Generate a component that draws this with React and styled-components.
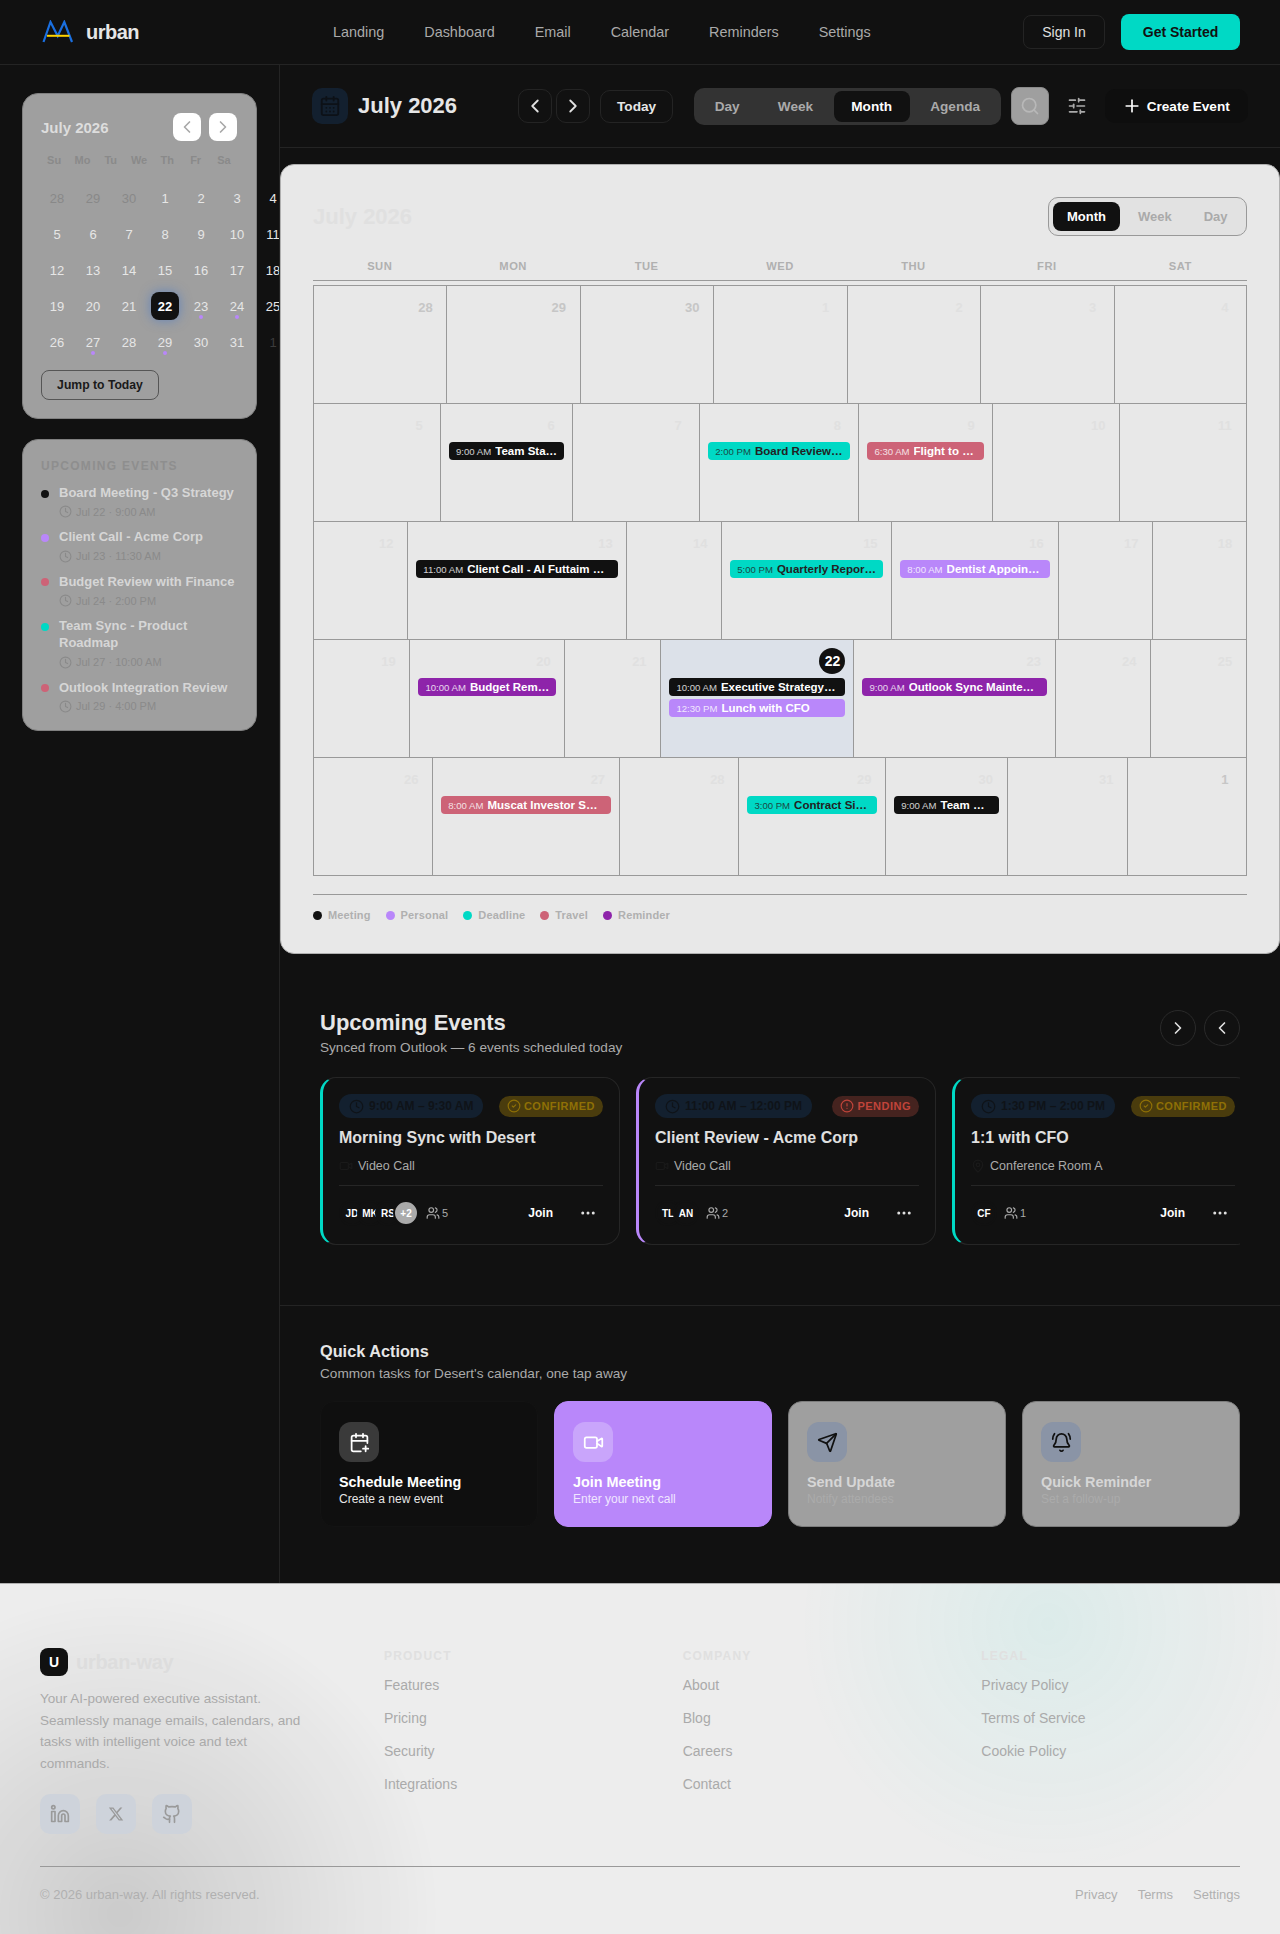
import React from "react";
import styled, { createGlobalStyle } from "styled-components";
import {
  BellRing, CalendarDays, CalendarPlus, ChevronLeft, ChevronRight, CircleAlert, CircleCheck,
  Clock, Ellipsis, Github, Linkedin, MapPin, Plus, Search, Send, SlidersHorizontal, Users, Video,
} from "lucide-react";
import { FaXTwitter } from "react-icons/fa6";

const TYPE = {
  meeting: { bg: "#111111", fg: "#ffffff" },
  personal: { bg: "#b987fa", fg: "#ffffff" },
  deadline: { bg: "#00d9c5", fg: "#222222" },
  travel: { bg: "#cd6377", fg: "#ffffff" },
  reminder: { bg: "#8e24aa", fg: "#ffffff" },
};

const Global = createGlobalStyle`
  * { box-sizing: border-box; }
  html, body { margin: 0; padding: 0; background: #111111; }
  body { font-family: "Liberation Sans", Arial, sans-serif; color: #e6e6e6; }
  button { font-family: inherit; }
`;

const Page = styled.div`
  width: 1280px;
  min-height: 1934px;
  display: flex;
  flex-direction: column;
  background: #111111;
  overflow: hidden;
`;

/* top navigation */
const Nav = styled.nav`
  height: 65px;
  flex: none;
  display: flex;
  align-items: center;
  padding: 0 40px;
  border-bottom: 1px solid #242424;
`;
const Brand = styled.div`
  display: flex;
  align-items: center;
  gap: 12px;
  svg { margin-left: 2px; display: block; }
`;
const Wordmark = styled.span`
  font-size: 20px;
  font-weight: 700;
  letter-spacing: -0.5px;
  color: #e6e6e6;
`;
const NavLinks = styled.div`
  display: flex;
  gap: 40px;
  margin-left: 194px;
`;
const NavLink = styled.a`
  font-size: 14.4px;
  color: #aaaaaa;
`;
const NavActions = styled.div`
  margin-left: auto;
  display: flex;
  align-items: center;
  gap: 16px;
`;
const SignIn = styled.button`
  width: 82px;
  height: 34px;
  border: 1px solid #242424;
  border-radius: 8px;
  background: transparent;
  color: #e0e0e0;
  font-size: 14px;
`;
const GetStarted = styled.button`
  width: 119px;
  height: 36px;
  border: 0;
  border-radius: 8px;
  background: #00d9c5;
  color: #111111;
  font-size: 14px;
  font-weight: 700;
`;

const Shell = styled.div`
  display: flex;
  flex: none;
`;

/* left rail */
const Sidebar = styled.aside`
  flex: 0 0 280px;
  width: 280px;
  padding: 28px 22px;
  border-right: 1px solid #242424;
  overflow: hidden;
  display: flex;
  flex-direction: column;
  gap: 20px;
`;
const Glass = styled.section`
  width: 235px;
  background: #9f9f9f;
  border: 1px solid #808080;
  border-radius: 16px;
  padding: ${(p) => p.$padding};
`;
const MiniHead = styled.div`
  display: flex;
  align-items: center;
  justify-content: space-between;
`;
const MiniTitle = styled.div`
  font-size: 15px;
  font-weight: 700;
  color: #dddddd;
`;
const MiniNav = styled.div`
  display: flex;
  gap: 8px;
  margin-right: 1px;
`;
const MiniBtn = styled.button`
  width: 28px;
  height: 28px;
  border: 0;
  border-radius: 8px;
  background: #ffffff;
  color: #a8a8a8;
  display: flex;
  align-items: center;
  justify-content: center;
  padding: 0;
`;
const MiniWeek = styled.div`
  display: grid;
  grid-template-columns: repeat(7, 28.3px);
  margin: 12px 0 0 -1px;
`;
const MiniWeekday = styled.div`
  text-align: center;
  font-size: 11px;
  line-height: 14px;
  font-weight: 700;
  color: #8a8a8a;
`;
const MiniDays = styled.div`
  display: grid;
  grid-template-columns: repeat(7, 28px);
  grid-auto-rows: 28px;
  gap: 8px;
  margin: 17px 0 0 2px;
  width: 280px;
`;
const MiniDay = styled.div`
  position: relative;
  display: flex;
  align-items: center;
  justify-content: center;
  font-size: 13px;
  border-radius: 8px;
  color: ${(p) => (p.$selected ? "#ffffff" : p.$muted ? "#6e6e6e" : "#e6e6e6")};
  opacity: ${(p) => (p.$muted ? 0.45 : 1)};
  font-weight: ${(p) => (p.$selected ? 700 : 400)};
  background: ${(p) => (p.$selected ? "#111111" : "transparent")};
  box-shadow: ${(p) => (p.$selected ? "0 0 12px rgba(50,110,210,.55)" : "none")};
`;
const MiniDot = styled.span`
  position: absolute;
  left: 12px;
  bottom: 1px;
  width: 4px;
  height: 4px;
  border-radius: 50%;
  background: #b987fa;
`;
const JumpBtn = styled.button`
  display: block;
  margin-top: 14px;
  height: 30px;
  width: 118px;
  border: 1px solid #555555;
  border-radius: 8px;
  background: transparent;
  color: #1a1a1a;
  font-size: 12.2px;
  font-weight: 700;
  padding: 0;
`;
const RailHeading = styled.div`
  font-size: 12px;
  line-height: 14px;
  font-weight: 700;
  letter-spacing: 1.3px;
  color: #8e8e8e;
  margin-bottom: 12px;
`;
const RailList = styled.div`
  display: flex;
  flex-direction: column;
  gap: 10.5px;
`;
const RailItem = styled.div`
  display: flex;
  gap: 10px;
`;
const RailDot = styled.span`
  flex: none;
  width: 8px;
  height: 8px;
  margin-top: 4.5px;
  border-radius: 50%;
  background: ${(p) => TYPE[p.$type].bg};
`;
const RailTitle = styled.div`
  font-size: 13px;
  line-height: 16.9px;
  font-weight: 700;
  color: #d6d6d6;
`;
const RailMeta = styled.div`
  display: flex;
  align-items: center;
  gap: 4px;
  margin-top: 3px;
  font-size: 11px;
  line-height: 14px;
  color: #8a8a8a;
`;

/* calendar */
const Main = styled.main`
  flex: 1;
  min-width: 0;
`;
const CalHeader = styled.header`
  height: 83px;
  display: flex;
  align-items: center;
  padding: 0 32px;
  border-bottom: 1px solid #242424;
`;
const HeadIcon = styled.div`
  width: 36px;
  height: 36px;
  border-radius: 10px;
  background: #13202f;
  color: #0d1117;
  display: flex;
  align-items: center;
  justify-content: center;
`;
const HeadTitle = styled.h1`
  margin: 0 61px 0 10px;
  font-size: 22px;
  font-weight: 700;
  color: #e6e6e6;
`;
const ArrowBtn = styled.button`
  width: 34px;
  height: 34px;
  margin-right: 4px;
  padding: 0;
  border: 1px solid #242424;
  border-radius: 10px;
  background: transparent;
  color: #e0e0e0;
  display: flex;
  align-items: center;
  justify-content: center;
`;
const TodayBtn = styled.button`
  margin-left: 6px;
  height: 33px;
  width: 73px;
  border: 1px solid #242424;
  border-radius: 10px;
  background: transparent;
  color: #e6e6e6;
  font-size: 13.6px;
  font-weight: 700;
  padding: 0;
`;
const Segment = styled.div`
  margin-left: 21px;
  height: 37px;
  padding: 3px;
  display: flex;
  gap: 3px;
  border-radius: 10px;
  background: #333333;
`;
const SegTab = styled.button`
  border: 0;
  padding: 0 17.6px;
  border-radius: 8px;
  font-size: 13.6px;
  font-weight: 700;
  color: ${(p) => (p.$active ? "#ffffff" : "#aaaaaa")};
  background: ${(p) => (p.$active ? "#111111" : "transparent")};
`;
const SearchBtn = styled.button`
  margin-left: 10px;
  width: 38px;
  height: 38px;
  padding: 0;
  border: 1px solid #8a8a8a;
  border-radius: 8px;
  background: #9f9f9f;
  color: #b8b8b8;
  display: flex;
  align-items: center;
  justify-content: center;
`;
const FilterIcon = styled.div`
  margin-left: 18px;
  color: #aaaaaa;
  display: flex;
`;
const CreateBtn = styled.button`
  margin-left: 18px;
  width: 143px;
  height: 34px;
  padding: 0 0 0 17px;
  border: 0;
  border-radius: 10px;
  background: #0e0e0e;
  color: #ffffff;
  font-size: 13.6px;
  font-weight: 700;
  display: flex;
  align-items: center;
  gap: 5px;
  flex: none;
`;
const CalCard = styled.section`
  margin: 16px 0 0;
  height: 790px;
  padding: 32px;
  background: #e8e8e8;
  border: 1px solid #b0b0b0;
  border-radius: 14px;
`;
const CalTop = styled.div`
  display: flex;
  align-items: center;
  justify-content: space-between;
`;
const CalTitle = styled.h2`
  margin: 0;
  font-size: 22px;
  font-weight: 700;
  color: #e0e0e0;
`;
const Toggle = styled.div`
  width: 199px;
  height: 39px;
  padding: 4px;
  display: flex;
  gap: 4px;
  border: 1px solid #999999;
  border-radius: 10px;
  background: #e2e2e2;
`;
const ToggleTab = styled.button`
  border: 0;
  padding: 0 14px;
  border-radius: 8px;
  font-size: 13px;
  font-weight: 700;
  color: ${(p) => (p.$active ? "#ffffff" : "#aaaaaa")};
  background: ${(p) => (p.$active ? "#111111" : "transparent")};
`;
const WeekHead = styled.div`
  display: grid;
  grid-template-columns: repeat(7, 1fr);
  margin-top: 24px;
  padding-bottom: 7px;
  border-bottom: 1px solid #999999;
`;
const WeekLabel = styled.div`
  text-align: center;
  font-size: 11.2px;
  line-height: 13px;
  font-weight: 700;
  letter-spacing: 0.5px;
  color: #b0b0b0;
`;
const Grid = styled.div`
  margin-top: 4px;
  border-bottom: 1px solid #999999;
`;
const Row = styled.div`
  display: grid;
  grid-template-columns: ${(p) => p.$cols};
  height: 118px;
  border-top: 1px solid #999999;
`;
const Cell = styled.div`
  min-width: 0;
  padding: 8px 8px 0;
  border-left: 1px solid #999999;
  background: ${(p) => (p.$today ? "#dce1e9" : "transparent")};
  &:last-child { border-right: 1px solid #999999; }
`;
const DateMark = styled.div`
  width: 26px;
  height: 26px;
  margin-left: auto;
  display: flex;
  align-items: center;
  justify-content: center;
  border-radius: 50%;
  font-size: ${(p) => (p.$today ? "14px" : "13px")};
  font-weight: 700;
  color: ${(p) => (p.$today ? "#ffffff" : p.$outside ? "#c6c6c6" : "#e0e0e0")};
  background: ${(p) => (p.$today ? "#111111" : "transparent")};
`;
const EventList = styled.div`
  margin-top: 4px;
  display: flex;
  flex-direction: column;
  gap: 3px;
`;
const EventChip = styled.div`
  height: 18px;
  padding: 0 7px;
  display: flex;
  align-items: center;
  gap: 4px;
  border-radius: 4px;
  background: ${(p) => TYPE[p.$type].bg};
  color: ${(p) => TYPE[p.$type].fg};
  overflow: hidden;
  white-space: nowrap;
`;
const EventTime = styled.span`
  flex: none;
  font-size: 9.6px;
  opacity: 0.8;
`;
const EventName = styled.span`
  flex: 1;
  min-width: 0;
  font-size: 11.52px;
  font-weight: 700;
  overflow: hidden;
  text-overflow: ellipsis;
`;
const Legend = styled.div`
  margin-top: 18px;
  padding-top: 13px;
  border-top: 1px solid #999999;
  display: flex;
  gap: 15px;
`;
const LegendItem = styled.div`
  display: flex;
  align-items: center;
  gap: 6px;
  font-size: 11px;
  line-height: 14px;
  font-weight: 700;
  letter-spacing: 0.15px;
  color: #b0b0b0;
`;
const LegendDot = styled.span`
  width: 9px;
  height: 9px;
  border-radius: 50%;
  background: ${(p) => TYPE[p.$type].bg};
`;

/* upcoming */
const Upcoming = styled.section`
  padding: 55px 40px 60px;
`;
const SectionHead = styled.div`
  display: flex;
  justify-content: space-between;
  align-items: flex-start;
`;
const BigHeading = styled.h2`
  margin: 0;
  font-size: 22px;
  line-height: 28px;
  font-weight: 700;
  color: #e6e6e6;
`;
const SubHeading = styled.p`
  margin: 2px 0 0;
  font-size: 13.6px;
  line-height: 17px;
  color: #aaaaaa;
`;
const RoundNav = styled.div`
  display: flex;
  gap: 8px;
  margin-top: 1px;
`;
const RoundBtn = styled.button`
  width: 36px;
  height: 36px;
  padding: 0;
  border: 1px solid #2a2a2a;
  border-radius: 50%;
  background: transparent;
  color: #e0e0e0;
  display: flex;
  align-items: center;
  justify-content: center;
`;
const Carousel = styled.div`
  margin-top: 21px;
  display: flex;
  gap: 16px;
  overflow: hidden;
`;
const EventCard = styled.article`
  flex: 0 0 300px;
  height: 168px;
  padding: 16px 16px 18px;
  border: 1px solid #262626;
  border-left: 3px solid ${(p) => TYPE[p.$type].bg};
  border-radius: 16px;
`;
const CardTop = styled.div`
  display: flex;
  align-items: center;
  justify-content: space-between;
`;
const TimePill = styled.div`
  height: 24px;
  padding: 0 10px;
  display: flex;
  align-items: center;
  gap: 5px;
  border-radius: 12px;
  background: #13202f;
  color: #0f1318;
  font-size: 12px;
  font-weight: 700;
`;
const StatusBadge = styled.div`
  height: 21px;
  padding: 0 8px;
  display: flex;
  align-items: center;
  gap: 3px;
  border-radius: 11px;
  font-size: 11px;
  font-weight: 700;
  letter-spacing: 0.5px;
  background: ${(p) => (p.$pending ? "#45231f" : "#4a3c0d")};
  color: ${(p) => (p.$pending ? "#c0443a" : "#8f7006")};
`;
const CardTitle = styled.h3`
  margin: 10px 0 0;
  font-size: 16px;
  line-height: 20px;
  font-weight: 700;
  color: #e0e0e0;
`;
const CardPlace = styled.div`
  margin-top: 11px;
  display: flex;
  align-items: center;
  gap: 5px;
  font-size: 12.5px;
  line-height: 14px;
  color: #aaaaaa;
  svg { color: #1a1a1a; }
`;
const CardFoot = styled.div`
  margin-top: 12px;
  padding-top: 14px;
  border-top: 1px solid #262626;
  display: flex;
  align-items: center;
`;
const Avatars = styled.div`
  display: flex;
`;
const Avatar = styled.div`
  flex: none;
  width: 26px;
  height: 26px;
  margin-left: ${(p) => (p.$first ? 0 : "-8px")};
  border: 2px solid #111111;
  border-radius: 50%;
  background: ${(p) => (p.$more ? "#aaaaaa" : "#111111")};
  color: #ffffff;
  font-size: 10px;
  font-weight: 700;
  display: flex;
  align-items: center;
  justify-content: center;
  position: relative;
  white-space: nowrap;
`;
const Count = styled.div`
  margin-left: 7px;
  display: flex;
  align-items: center;
  gap: 2px;
  font-size: 11px;
  color: #aaaaaa;
`;
const JoinBtn = styled.button`
  margin-left: auto;
  padding: 0 14px;
  height: 26px;
  border: 0;
  background: transparent;
  color: #ffffff;
  font-size: 12px;
  font-weight: 700;
`;
const MoreBtn = styled.button`
  margin-left: 6px;
  width: 30px;
  height: 26px;
  padding: 0;
  border: 0;
  background: transparent;
  color: #e0e0e0;
  display: flex;
  align-items: center;
  justify-content: center;
`;

/* quick actions */
const Quick = styled.section`
  border-top: 1px solid #242424;
  padding: 35px 40px 56px;
`;
const QuickHeading = styled.h2`
  margin: 0;
  font-size: 16.3px;
  line-height: 21px;
  font-weight: 700;
  color: #e6e6e6;
`;
const QuickSub = styled.p`
  margin: 3px 0 0;
  font-size: 13.6px;
  line-height: 17px;
  color: #aaaaaa;
`;
const QuickGrid = styled.div`
  margin-top: 19px;
  display: grid;
  grid-template-columns: repeat(4, 1fr);
  gap: 16px;
`;
const toneBg = { dark: "#0f0f0f", purple: "#b987fa", grey: "#9f9f9f" };
const toneBorder = { dark: "#131313", purple: "#b987fa", grey: "#7c7c7c" };
const toneTile = { dark: "#3a3a3a", purple: "#c9a5fb", grey: "#8a94a6" };
const QuickCard = styled.div`
  height: 126px;
  padding: 20px 18px;
  border: 1px solid ${(p) => toneBorder[p.$tone]};
  border-radius: 14px;
  background: ${(p) => toneBg[p.$tone]};
`;
const QuickTile = styled.div`
  width: 40px;
  height: 40px;
  border-radius: 12px;
  display: flex;
  align-items: center;
  justify-content: center;
  background: ${(p) => toneTile[p.$tone]};
  color: ${(p) => (p.$tone === "grey" ? "#111111" : "#ffffff")};
`;
const QuickLabel = styled.div`
  margin-top: 12px;
  font-size: 14.4px;
  line-height: 17px;
  font-weight: 700;
  color: ${(p) => (p.$tone === "grey" ? "#d6d6d6" : "#ffffff")};
`;
const QuickNote = styled.div`
  margin-top: 1px;
  font-size: 12px;
  line-height: 14px;
  color: ${(p) => (p.$tone === "grey" ? "#ababab" : p.$tone === "purple" ? "#f0e6ff" : "#e6e6e6")};
`;

/* footer */
const Footer = styled.footer`
  flex: 1;
  padding: 64px 40px 32px;
  border-top: 1px solid #b0b0b0;
  background:
    radial-gradient(circle 250px at 1048px 40px, rgba(0, 217, 197, 0.07), rgba(0, 217, 197, 0)),
    radial-gradient(circle 320px at 120px 330px, rgba(0, 0, 0, 0.14), rgba(0, 0, 0, 0)),
    #ededed;
`;
const FootGrid = styled.div`
  display: grid;
  grid-template-columns: 304px repeat(3, 1fr);
  gap: 40px;
`;
const FootBrand = styled.div`
  display: flex;
  align-items: center;
  gap: 8px;
`;
const FootMark = styled.div`
  width: 28px;
  height: 28px;
  border-radius: 8px;
  background: #111111;
  color: #ffffff;
  font-size: 14px;
  font-weight: 700;
  display: flex;
  align-items: center;
  justify-content: center;
`;
const FootName = styled.span`
  font-size: 20px;
  font-weight: 700;
  letter-spacing: -0.3px;
  color: #dddddd;
`;
const FootText = styled.p`
  margin: 12px 0 0;
  max-width: 262px;
  font-size: 13.5px;
  line-height: 21.6px;
  color: #aaaaaa;
`;
const Socials = styled.div`
  margin-top: 20px;
  display: flex;
  gap: 16px;
`;
const Social = styled.a`
  width: 40px;
  height: 40px;
  border-radius: 10px;
  background: #ced3db;
  color: #9a9a9a;
  display: flex;
  align-items: center;
  justify-content: center;
`;
const FootCol = styled.div`
  display: flex;
  flex-direction: column;
  gap: 17px;
`;
const FootHeading = styled.div`
  font-size: 12px;
  line-height: 14px;
  font-weight: 700;
  letter-spacing: 1.2px;
  color: #e0e0e0;
  margin-bottom: -3px;
  margin-top: 1px;
`;
const FootLink = styled.a`
  font-size: 14px;
  line-height: 16px;
  color: #aaaaaa;
`;
const FootBottom = styled.div`
  margin-top: 32px;
  padding-top: 20px;
  border-top: 1px solid #999999;
  display: flex;
  justify-content: space-between;
  font-size: 13px;
  line-height: 15px;
  color: #b0b0b0;
`;
const FootLegal = styled.div`
  display: flex;
  gap: 20px;
`;

const Logo = () => (
  <svg width="32" height="24" viewBox="0 0 32 24" fill="none">
    <path d="M1.5 22 8.5 2 15.7 16 22.3 2 30 22" stroke="#1a6fe0" strokeWidth="2.2" />
    <path d="M5 15.8H27.5" stroke="#ffd400" strokeWidth="2" />
  </svg>
);

const prevMonth = [28, 29, 30];
const miniDots = new Set([23, 24, 27, 29]);
const miniDays = [
  ...prevMonth.map((d) => ({ d, muted: true })),
  ...Array.from({ length: 31 }, (_, i) => ({ d: i + 1 })),
  { d: 1, muted: true },
];

const railEvents = [
  ["meeting", "Board Meeting - Q3 Strategy", "Jul 22 · 9:00 AM"],
  ["personal", "Client Call - Acme Corp", "Jul 23 · 11:30 AM"],
  ["travel", "Budget Review with Finance", "Jul 24 · 2:00 PM"],
  ["deadline", "Team Sync - Product Roadmap", "Jul 27 · 10:00 AM"],
  ["travel", "Outlook Integration Review", "Jul 29 · 4:00 PM"],
];

const weeks = [
  {
    cols: "repeat(7, 133.43px)",
    days: [{ d: 28, out: 1 }, { d: 29, out: 1 }, { d: 30, out: 1 }, { d: 1 }, { d: 2 }, { d: 3 }, { d: 4 }],
  },
  {
    cols: "127px 132.2px 127px 159.2px 133.8px 127px 127.8px",
    days: [
      { d: 5 },
      { d: 6, ev: [["meeting", "9:00 AM", "Team Standup"]] },
      { d: 7 },
      { d: 8, ev: [["deadline", "2:00 PM", "Board Review Prep"]] },
      { d: 9, ev: [["travel", "6:30 AM", "Flight to Dubai"]] },
      { d: 10 },
      { d: 11 },
    ],
  },
  {
    cols: "94.3px 219.2px 94.7px 170.2px 166.2px 94.6px 94.8px",
    days: [
      { d: 12 },
      { d: 13, ev: [["meeting", "11:00 AM", "Client Call - Al Futtaim Group"]] },
      { d: 14 },
      { d: 15, ev: [["deadline", "5:00 PM", "Quarterly Report Due"]] },
      { d: 16, ev: [["personal", "8:00 AM", "Dentist Appointment"]] },
      { d: 17 },
      { d: 18 },
    ],
  },
  {
    cols: "96.4px 155.1px 95.9px 193.1px 201.2px 95.5px 96.8px",
    days: [
      { d: 19 },
      { d: 20, ev: [["reminder", "10:00 AM", "Budget Reminder"]] },
      { d: 21 },
      { d: 22, today: 1, ev: [["meeting", "10:00 AM", "Executive Strategy Session"], ["personal", "12:30 PM", "Lunch with CFO"]] },
      { d: 23, ev: [["reminder", "9:00 AM", "Outlook Sync Maintenance"]] },
      { d: 24 },
      { d: 25 },
    ],
  },
  {
    cols: "119.2px 186.7px 119.5px 146.9px 121.45px 120.5px 119.75px",
    days: [
      { d: 26 },
      { d: 27, ev: [["travel", "8:00 AM", "Muscat Investor Summit"]] },
      { d: 28 },
      { d: 29, ev: [["deadline", "3:00 PM", "Contract Signing"]] },
      { d: 30, ev: [["meeting", "9:00 AM", "Team Sync"]] },
      { d: 31 },
      { d: 1, out: 1 },
    ],
  },
];

const cards = [
  { type: "deadline", time: "9:00 AM – 9:30 AM", status: "CONFIRMED", title: "Morning Sync with Desert", place: "Video Call", people: ["JD", "MK", "RS"], more: "+2", count: 5 },
  { type: "personal", time: "11:00 AM – 12:00 PM", status: "PENDING", title: "Client Review - Acme Corp", place: "Video Call", people: ["TL", "AN"], count: 2 },
  { type: "deadline", time: "1:30 PM – 2:00 PM", status: "CONFIRMED", title: "1:1 with CFO", place: "Conference Room A", room: true, people: ["CF"], count: 1 },
];

const actions = [
  { tone: "dark", Icon: CalendarPlus, label: "Schedule Meeting", note: "Create a new event" },
  { tone: "purple", Icon: Video, label: "Join Meeting", note: "Enter your next call" },
  { tone: "grey", Icon: Send, label: "Send Update", note: "Notify attendees" },
  { tone: "grey", Icon: BellRing, label: "Quick Reminder", note: "Set a follow-up" },
];

const footCols = [
  ["PRODUCT", ["Features", "Pricing", "Security", "Integrations"]],
  ["COMPANY", ["About", "Blog", "Careers", "Contact"]],
  ["LEGAL", ["Privacy Policy", "Terms of Service", "Cookie Policy"]],
];

export default function App() {
  return (
    <Page>
      <Global />
      <Nav>
        <Brand>
          <Logo />
          <Wordmark>urban</Wordmark>
        </Brand>
        <NavLinks>
          {["Landing", "Dashboard", "Email", "Calendar", "Reminders", "Settings"].map((l) => (
            <NavLink key={l}>{l}</NavLink>
          ))}
        </NavLinks>
        <NavActions>
          <SignIn>Sign In</SignIn>
          <GetStarted>Get Started</GetStarted>
        </NavActions>
      </Nav>

      <Shell>
        <Sidebar>
          <Glass $padding="19px 18px 18px">
            <MiniHead>
              <MiniTitle>July 2026</MiniTitle>
              <MiniNav>
                <MiniBtn><ChevronLeft size={20} /></MiniBtn>
                <MiniBtn><ChevronRight size={20} /></MiniBtn>
              </MiniNav>
            </MiniHead>
            <MiniWeek>
              {["Su", "Mo", "Tu", "We", "Th", "Fr", "Sa"].map((w) => (
                <MiniWeekday key={w}>{w}</MiniWeekday>
              ))}
            </MiniWeek>
            <MiniDays>
              {miniDays.map((c, i) => (
                <MiniDay key={i} $muted={c.muted} $selected={!c.muted && c.d === 22}>
                  {c.d}
                  {!c.muted && miniDots.has(c.d) && <MiniDot />}
                </MiniDay>
              ))}
            </MiniDays>
            <JumpBtn>Jump to Today</JumpBtn>
          </Glass>
          <Glass $padding="19px 18px 17px">
            <RailHeading>UPCOMING EVENTS</RailHeading>
            <RailList>
              {railEvents.map(([type, title, meta]) => (
                <RailItem key={title}>
                  <RailDot $type={type} />
                  <div>
                    <RailTitle>{title}</RailTitle>
                    <RailMeta>
                      <Clock size={13} />
                      {meta}
                    </RailMeta>
                  </div>
                </RailItem>
              ))}
            </RailList>
          </Glass>
        </Sidebar>

        <Main>
          <CalHeader>
            <HeadIcon><CalendarDays size={22} /></HeadIcon>
            <HeadTitle>July 2026</HeadTitle>
            <ArrowBtn><ChevronLeft size={22} /></ArrowBtn>
            <ArrowBtn><ChevronRight size={22} /></ArrowBtn>
            <TodayBtn>Today</TodayBtn>
            <Segment>
              {["Day", "Week", "Month", "Agenda"].map((t) => (
                <SegTab key={t} $active={t === "Month"}>{t}</SegTab>
              ))}
            </Segment>
            <SearchBtn><Search size={20} /></SearchBtn>
            <FilterIcon><SlidersHorizontal size={20} /></FilterIcon>
            <CreateBtn><Plus size={20} />Create Event</CreateBtn>
          </CalHeader>

          <CalCard>
            <CalTop>
              <CalTitle>July 2026</CalTitle>
              <Toggle>
                {["Month", "Week", "Day"].map((t) => (
                  <ToggleTab key={t} $active={t === "Month"}>{t}</ToggleTab>
                ))}
              </Toggle>
            </CalTop>
            <WeekHead>
              {["SUN", "MON", "TUE", "WED", "THU", "FRI", "SAT"].map((w) => (
                <WeekLabel key={w}>{w}</WeekLabel>
              ))}
            </WeekHead>
            <Grid>
              {weeks.map((w, i) => (
                <Row key={i} $cols={w.cols}>
                  {w.days.map((c, j) => (
                    <Cell key={j} $today={c.today}>
                      <DateMark $today={c.today} $outside={c.out}>{c.d}</DateMark>
                      {c.ev && (
                        <EventList>
                          {c.ev.map(([type, time, name]) => (
                            <EventChip key={name} $type={type}>
                              <EventTime>{time}</EventTime>
                              <EventName>{name}</EventName>
                            </EventChip>
                          ))}
                        </EventList>
                      )}
                    </Cell>
                  ))}
                </Row>
              ))}
            </Grid>
            <Legend>
              {[["meeting", "Meeting"], ["personal", "Personal"], ["deadline", "Deadline"], ["travel", "Travel"], ["reminder", "Reminder"]].map(([t, l]) => (
                <LegendItem key={t}>
                  <LegendDot $type={t} />
                  {l}
                </LegendItem>
              ))}
            </Legend>
          </CalCard>

          <Upcoming>
            <SectionHead>
              <div>
                <BigHeading>Upcoming Events</BigHeading>
                <SubHeading>Synced from Outlook — 6 events scheduled today</SubHeading>
              </div>
              <RoundNav>
                <RoundBtn><ChevronRight size={20} /></RoundBtn>
                <RoundBtn><ChevronLeft size={20} /></RoundBtn>
              </RoundNav>
            </SectionHead>
            <Carousel>
              {cards.map((c) => {
                const pending = c.status === "PENDING";
                const StatusIcon = pending ? CircleAlert : CircleCheck;
                const PlaceIcon = c.room ? MapPin : Video;
                return (
                  <EventCard key={c.title} $type={c.type}>
                    <CardTop>
                      <TimePill><Clock size={15} />{c.time}</TimePill>
                      <StatusBadge $pending={pending}><StatusIcon size={14} />{c.status}</StatusBadge>
                    </CardTop>
                    <CardTitle>{c.title}</CardTitle>
                    <CardPlace><PlaceIcon size={14} />{c.place}</CardPlace>
                    <CardFoot>
                      <Avatars>
                        {c.people.map((p, i) => (
                          <Avatar key={p} $first={i === 0}>{p}</Avatar>
                        ))}
                        {c.more && <Avatar $more>{c.more}</Avatar>}
                      </Avatars>
                      <Count><Users size={14} />{c.count}</Count>
                      <JoinBtn>Join</JoinBtn>
                      <MoreBtn><Ellipsis size={18} /></MoreBtn>
                    </CardFoot>
                  </EventCard>
                );
              })}
            </Carousel>
          </Upcoming>

          <Quick>
            <QuickHeading>Quick Actions</QuickHeading>
            <QuickSub>Common tasks for Desert's calendar, one tap away</QuickSub>
            <QuickGrid>
              {actions.map(({ tone, Icon, label, note }) => (
                <QuickCard key={label} $tone={tone}>
                  <QuickTile $tone={tone}><Icon size={21} /></QuickTile>
                  <QuickLabel $tone={tone}>{label}</QuickLabel>
                  <QuickNote $tone={tone}>{note}</QuickNote>
                </QuickCard>
              ))}
            </QuickGrid>
          </Quick>
        </Main>
      </Shell>

      <Footer>
        <FootGrid>
          <div>
            <FootBrand>
              <FootMark>U</FootMark>
              <FootName>urban-way</FootName>
            </FootBrand>
            <FootText>
              Your AI-powered executive assistant. Seamlessly manage emails, calendars, and tasks with intelligent voice and text commands.
            </FootText>
            <Socials>
              <Social><Linkedin size={20} /></Social>
              <Social><FaXTwitter size={16} /></Social>
              <Social><Github size={20} /></Social>
            </Socials>
          </div>
          {footCols.map(([h, links]) => (
            <FootCol key={h}>
              <FootHeading>{h}</FootHeading>
              {links.map((l) => <FootLink key={l}>{l}</FootLink>)}
            </FootCol>
          ))}
        </FootGrid>
        <FootBottom>
          <span>© 2026 urban-way. All rights reserved.</span>
          <FootLegal>
            <span>Privacy</span>
            <span>Terms</span>
            <span>Settings</span>
          </FootLegal>
        </FootBottom>
      </Footer>
    </Page>
  );
}
